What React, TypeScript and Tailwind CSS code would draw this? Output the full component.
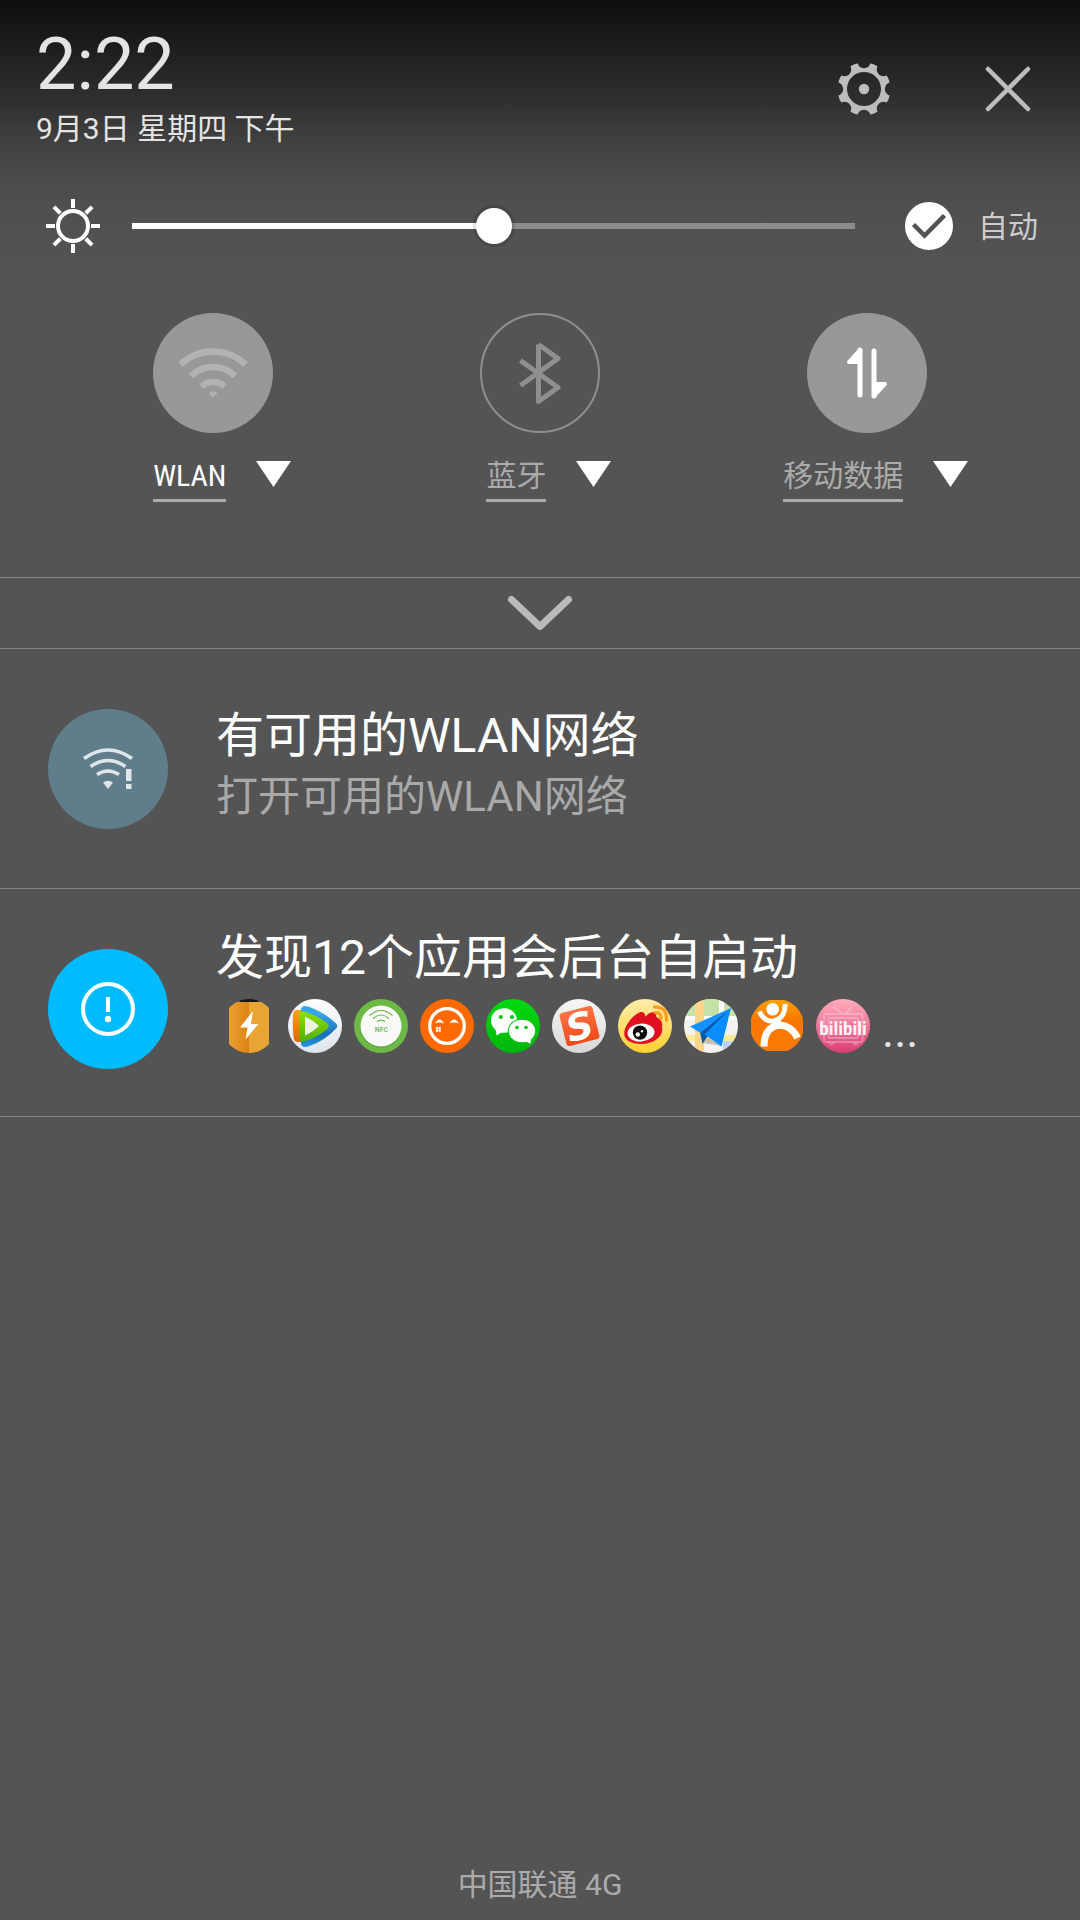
import { useState } from 'react';
import type { ReactNode } from 'react';

const WifiGlyph = () => (
  <svg viewBox="0 0 120 120" className="w-full h-full" fill="none" stroke="#b2b2b2" strokeWidth="6.500">
    <path d="M27.500 51.500 A47 47 0 0 1 92.500 51.500" />
    <path d="M38 63 A31.500 31.500 0 0 1 82 63" />
    <path d="M48.500 73.500 A17 17 0 0 1 71.500 73.500" />
    <path d="M55.500 80 Q60 76.500 64.500 80 L60 84.500 Z" fill="#b2b2b2" stroke="none" />
  </svg>
);

const BluetoothGlyph = () => (
  <svg viewBox="0 0 120 120" className="w-full h-full" fill="none" stroke="#8f8f8f" strokeWidth="5">
    <circle cx="60" cy="60" r="59" strokeWidth="2" />
    <path d="M58.500 31.500 V88.500 L78 74.500 L40.500 47.500 M40.500 72.500 L78 45.500 L58.500 31.500" strokeLinejoin="round" />
  </svg>
);

const DataGlyph = () => (
  <svg viewBox="0 0 120 120" className="w-full h-full" fill="#fff" stroke="#fff" strokeLinecap="round" strokeLinejoin="round">
    <path d="M53 37 V82" strokeWidth="5" />
    <path d="M53 37 L42 49 H53 Z" strokeWidth="4" />
    <path d="M67 38 V83" strokeWidth="5" />
    <path d="M67 83 L78 71 H67 Z" strokeWidth="4" />
  </svg>
);

const GearIcon = () => (
  <svg viewBox="-27 -27 54 54" className="w-[54px] h-[54px]">
    <mask id="gear-teeth">
      <rect x="-27" y="-27" width="54" height="54" fill="#fff" />
      {[0, 45, 90, 135, 180, 225, 270, 315].map((angle) => (
        <circle key={angle} cx="27.500" cy="0" r="6.700" fill="#000" transform={`rotate(${angle})`} />
      ))}
      <circle r="17" fill="#000" />
    </mask>
    <circle r="26.500" fill="#bdbdbd" mask="url(#gear-teeth)" />
    <circle r="5.200" fill="#bdbdbd" />
  </svg>
);

const SunIcon = () => (
  <svg viewBox="-27 -27 54 54" className="w-[54px] h-[54px] shrink-0" fill="none" stroke="#fff" strokeWidth="4">
    <circle r="15" />
    {[0, 45, 90, 135, 180, 225, 270, 315].map((angle) => (
      <path key={angle} d="M18 0 H27" transform={`rotate(${angle})`} />
    ))}
  </svg>
);

const BatteryApp = () => (
  <svg viewBox="0 0 54 54" className="w-[54px] h-[54px]">
    <defs>
      <linearGradient id="battery-left">
        <stop offset="0" stopColor="#eba032" />
        <stop offset="1" stopColor="#dd8415" />
      </linearGradient>
      <clipPath id="battery-clip"><circle cx="27" cy="27" r="27" /></clipPath>
    </defs>
    <g clipPath="url(#battery-clip)">
      <rect x="18" y="0" width="18" height="4" fill="#151515" />
      <rect x="7" y="3" width="20" height="51" fill="url(#battery-left)" />
      <rect x="27" y="3" width="20" height="51" fill="#e9a533" />
    </g>
    <path d="M31 12 L18 28.500 H25.500 L23.500 40.500 L36.500 25 H29 Z" fill="#fff" />
  </svg>
);

const VideoApp = () => (
  <svg viewBox="0 0 54 54" className="w-[54px] h-[54px]">
    <defs>
      <linearGradient id="video-bg" x2="0" y2="1">
        <stop offset="0" stopColor="#fcfdff" />
        <stop offset="1" stopColor="#dfe5ed" />
      </linearGradient>
      <linearGradient id="video-blue" x2="0" y2="1">
        <stop offset="0.200" stopColor="#38a5ea" />
        <stop offset="0.700" stopColor="#1a70b8" />
        <stop offset="1" stopColor="#2396df" />
      </linearGradient>
      <linearGradient id="video-green" x2="0" y2="1">
        <stop offset="0" stopColor="#8be000" />
        <stop offset="1" stopColor="#52b000" />
      </linearGradient>
      <linearGradient id="video-orange" x2="0" y2="1">
        <stop offset="0" stopColor="#f9a01b" />
        <stop offset="1" stopColor="#e06500" />
      </linearGradient>
    </defs>
    <circle cx="27" cy="27" r="27" fill="url(#video-bg)" />
    <path d="M13 10 Q14 6 20 7.500 Q36 13 48 24.500 Q50.500 27 48 29.500 Q37 42 20 47.500 Q14 49 13 45 Z" fill="url(#video-blue)" />
    <path d="M5 16 Q5 11 9 11 H13 V43 H10 Q6 43 5.500 38 Q4.500 27 5 16 Z" fill="url(#video-orange)" />
    <path d="M11.500 14 Q12.500 11.500 16 12.500 Q30 16.500 39.500 24.500 Q42 27 39.500 29.500 Q30 38.500 16 42.500 Q12.500 43.500 11.500 41 Z" fill="url(#video-green)" />
    <path d="M17 17.500 Q25 21 31 27 Q25 33 17 36.500 Z" fill="#eef1e6" />
  </svg>
);

const NfcApp = () => (
  <svg viewBox="0 0 54 54" className="w-[54px] h-[54px]">
    <circle cx="27" cy="27" r="27" fill="#6cba45" />
    <circle cx="27" cy="28" r="20.500" fill="#4b9a2c" />
    <circle cx="27" cy="27" r="20.500" fill="#f9faf8" />
    <g fill="none" stroke="#62b53d" strokeWidth="1.200">
      <path d="M15.500 16.500 Q27 6.500 38.500 16.500" />
      <path d="M19 19.500 Q27 12.500 35 19.500" />
      <path d="M23 22.800 Q27 19.500 31 22.800" />
    </g>
    <text x="27.500" y="32.500" textAnchor="middle" className="font-[Roboto] text-[7px] font-bold" fill="#86bb70">NFC</text>
  </svg>
);

const SmileApp = () => (
  <svg viewBox="0 0 54 54" className="w-[54px] h-[54px]">
    <circle cx="27" cy="27" r="27" fill="#ff6a00" />
    <circle cx="27" cy="27" r="17.300" fill="none" stroke="#fff" strokeWidth="3.300" />
    <path d="M15 24.500 Q19.500 16.500 24 24.500 Q19.500 22.500 15 24.500 Z" fill="#fff" />
    <path d="M29.500 24.500 Q34 16.500 38.700 24.500 Q34 22.500 29.500 24.500 Z" fill="#fff" />
    <path d="M17 27.800 V33 M19.800 27.800 V33 M15.800 29.200 H21 M15.800 31.700 H21" stroke="#fff" strokeWidth="1.300" />
  </svg>
);

const WechatApp = () => (
  <svg viewBox="0 0 54 54" className="w-[54px] h-[54px]">
    <linearGradient id="wechat-bg" x2="0" y2="1">
      <stop offset="0" stopColor="#00da0f" />
      <stop offset="1" stopColor="#00b60c" />
    </linearGradient>
    <circle cx="27" cy="27" r="27" fill="url(#wechat-bg)" />
    <ellipse cx="18" cy="21.500" rx="13" ry="12.300" fill="#fff" />
    <path d="M10 30 L10.500 36.500 L18 32 Z" fill="#fff" />
    <ellipse cx="36" cy="32" rx="14.300" ry="12.300" fill="#00c60d" />
    <ellipse cx="36" cy="32" rx="13.200" ry="11.200" fill="#fff" />
    <path d="M44.500 38 L44.800 44.500 L38 42 Z" fill="#fff" />
    <g fill="#00c60d">
      <circle cx="14.800" cy="18" r="2.100" />
      <circle cx="26" cy="18" r="2.100" />
      <circle cx="31" cy="28.500" r="1.800" />
      <circle cx="40" cy="28.500" r="1.800" />
    </g>
  </svg>
);

const SogouApp = () => (
  <svg viewBox="0 0 54 54" className="w-[54px] h-[54px]">
    <linearGradient id="sogou-bg" x2="0" y2="1">
      <stop offset="0" stopColor="#f6f6f6" />
      <stop offset="1" stopColor="#d9d9d9" />
    </linearGradient>
    <linearGradient id="sogou-tile" x2="0" y2="1">
      <stop offset="0" stopColor="#fb7345" />
      <stop offset="1" stopColor="#f04a18" />
    </linearGradient>
    <circle cx="27" cy="27" r="27" fill="url(#sogou-bg)" />
    <g transform="rotate(-14 27.500 27)">
      <rect x="10.500" y="10" width="34" height="34" rx="3" fill="url(#sogou-tile)" />
      <text x="27.500" y="40.500" textAnchor="middle" className="font-['DejaVu_Sans'] text-[37px] font-bold italic" fill="#fff">S</text>
    </g>
  </svg>
);

const WeiboApp = () => (
  <svg viewBox="0 0 54 54" className="w-[54px] h-[54px]">
    <linearGradient id="weibo-bg" x2="0" y2="1">
      <stop offset="0" stopColor="#ffedab" />
      <stop offset="1" stopColor="#ffd02f" />
    </linearGradient>
    <circle cx="27" cy="27" r="27" fill="url(#weibo-bg)" />
    <path d="M6.200 34 C6.500 27 14 17 21.500 13.500 C25 12 27 14 27.500 17.500 C31 13.500 36 12 37.500 14.500 C38.300 16 38 17.500 39 18.500 C43 20 45 24 44 28 C46 37 36 45 23.500 45 C13 45 6 41 6.200 34 Z" fill="#e01020" />
    <ellipse cx="23" cy="33.600" rx="13.500" ry="9" fill="#fff" transform="rotate(-5 23 33.600)" />
    <circle cx="22" cy="33.600" r="7.200" fill="#0c0c0c" />
    <circle cx="19.800" cy="35.500" r="2.200" fill="#fff" />
    <circle cx="24" cy="32.300" r="1.200" fill="#fff" />
    <g fill="none" stroke="#fb9d1e" strokeWidth="3.300" strokeLinecap="round">
      <path d="M36.500 7.800 Q49 7.500 48.500 21" />
      <path d="M37.500 13.500 Q43.500 13.500 42.800 19.500" />
    </g>
  </svg>
);

const MapApp = () => (
  <svg viewBox="0 0 54 54" className="w-[54px] h-[54px]">
    <clipPath id="map-clip"><circle cx="27" cy="27" r="27" /></clipPath>
    <g clipPath="url(#map-clip)">
      <rect width="54" height="54" fill="#f5f2ed" />
      <rect width="35" height="17" fill="#c4e1a6" />
      <rect x="40" width="14" height="17" fill="#c4e1a6" />
      <path d="M35 0 H40 V17 H54 V21 H0 V17 H35 Z" fill="#fff" />
      <rect y="36" width="54" height="6" fill="#fbeb92" />
      <rect x="39" y="42" width="15" height="12" fill="#b9d6f7" />
      <rect x="11" width="9" height="54" fill="#fdd58a" />
    </g>
    <path d="M19 44 L38 47 L24 39 Z" fill="#555" opacity="0.300" />
    <path d="M47 9 L16 33 L18.500 45 L23.500 37.500 Z" fill="#0a56a8" />
    <path d="M47 9 L6 27.500 L16.500 34 Z" fill="#1590ff" />
    <path d="M47 9 L20.500 35.500 L37.500 47.500 Z" fill="#0a8dff" />
  </svg>
);

const DianpingApp = () => (
  <svg viewBox="0 0 54 54" className="w-[54px] h-[54px]">
    <defs>
      <linearGradient id="dianping-bg" x2="0" y2="1">
        <stop offset="0" stopColor="#ffa200" />
        <stop offset="0.400" stopColor="#fb7600" />
        <stop offset="1" stopColor="#fb7a06" />
      </linearGradient>
      <clipPath id="dianping-clip"><circle cx="27" cy="27" r="27" /></clipPath>
    </defs>
    <rect x="1" y="1" width="52" height="51" fill="url(#dianping-bg)" clipPath="url(#dianping-clip)" />
    <circle cx="22.700" cy="10.300" r="6.300" fill="#fff" />
    <g fill="none" stroke="#fff">
      <path d="M9.500 12.500 C12.500 20 19 23.500 25 21.500 C32 19.500 35.500 13 35 5" strokeWidth="5" />
      <path d="M14 47.500 C14 36 18 28.500 27 26.500 C36 25 43.500 30.500 47.500 39" strokeWidth="7" />
      <path d="M26 21 L30 27" strokeWidth="7" />
    </g>
  </svg>
);

const BilibiliApp = () => (
  <svg viewBox="0 0 54 54" className="w-[54px] h-[54px]">
    <linearGradient id="bilibili-bg" x2="0" y2="1">
      <stop offset="0" stopColor="#ffacbb" />
      <stop offset="0.500" stopColor="#ee789b" />
      <stop offset="1" stopColor="#d83d72" />
    </linearGradient>
    <circle cx="27" cy="27" r="27" fill="url(#bilibili-bg)" />
    <g fill="none" stroke="#fff" strokeOpacity="0.250" strokeWidth="1.800">
      <rect x="8" y="15" width="38.500" height="28" rx="1.500" />
      <rect x="12.500" y="19" width="29.500" height="20" rx="1" />
      <path d="M17 7.500 L26 14.500 M36 8 L29 14.500 M13 43 Q15.500 48 18 43 M37 43 Q39.500 48 42 43" />
    </g>
    <text x="27" y="36" textAnchor="middle" className="font-['Roboto_Condensed',Roboto] text-[19px] font-bold" fill="#fff5f8">bilibili</text>
  </svg>
);

const apps = [
  { name: 'battery', Icon: BatteryApp },
  { name: 'video', Icon: VideoApp },
  { name: 'nfc', Icon: NfcApp },
  { name: 'smile', Icon: SmileApp },
  { name: 'wechat', Icon: WechatApp },
  { name: 'sogou', Icon: SogouApp },
  { name: 'weibo', Icon: WeiboApp },
  { name: 'map', Icon: MapApp },
  { name: 'dianping', Icon: DianpingApp },
  { name: 'bilibili', Icon: BilibiliApp },
];

interface TileProps {
  label: string;
  filled?: boolean;
  highlighted?: boolean;
  children: ReactNode;
}

const QuickTile: React.FC<TileProps> = ({ label, filled, highlighted, children }) => (
  <div className="flex flex-col items-center">
    <button
      type="button"
      aria-label={label}
      className={`w-[120px] h-[120px] rounded-full ${filled ? 'bg-[#989898]' : ''}`}
    >
      {children}
    </button>
    <button type="button" className="mt-6 pl-[18px] flex items-start gap-[30px]">
      <span
        className={`pb-1 border-b-3 border-[#ababab] font-['Roboto_Condensed',Roboto,'Noto_Sans_CJK_SC',sans-serif] text-[30px] leading-[38px] ${
          highlighted ? 'text-white' : 'text-[#ababab]'
        }`}
      >
        {label}
      </span>
      <svg viewBox="0 0 35 26" className="mt-1 w-[35px] h-[26px]">
        <path d="M0 0 H35 L17.500 26 Z" fill="#fff" />
      </svg>
    </button>
  </div>
);

const App: React.FC = () => {
  const [brightness, setBrightness] = useState(50);
  const [auto, setAuto] = useState(true);

  return (
    <div className="min-h-screen flex flex-col bg-[#545454] font-[Roboto,'Noto_Sans_CJK_SC',sans-serif]">
      <div className="bg-[linear-gradient(#0f0f0f_0px,#141414_20px,#222222_60px,#323232_107px,#3d3d3d_133px,#454545_155px,#4b4b4b_180px,#4f4f4f_205px,#545454_270px)]">
        {/* Clock and actions */}
        <header className="flex items-center justify-between pt-[29px] pl-9 pr-6">
          <div className="text-[#e4e4e4]">
            <h1 className="text-[72px] leading-[72px]">2:22</h1>
            <p className="mt-2 text-[30px] leading-[40px]">9月3日 星期四 下午</p>
          </div>
          <div className="flex gap-12">
            <button type="button" aria-label="设置" className="w-24 h-24 flex items-center justify-center">
              <GearIcon />
            </button>
            <button type="button" aria-label="关闭" className="w-24 h-24 flex items-center justify-center">
              <svg viewBox="0 0 46 46" className="w-[46px] h-[46px]" stroke="#bdbdbd" strokeWidth="4.500" strokeLinecap="round">
                <path d="M3 3 L43 43 M43 3 L3 43" />
              </svg>
            </button>
          </div>
        </header>

        {/* Brightness */}
        <div className="mt-[47px] h-[60px] pl-[46px] pr-[42px] flex items-center gap-8">
          <SunIcon />
          <input
            type="range"
            aria-label="亮度"
            value={brightness}
            onChange={(e) => setBrightness(Number(e.target.value))}
            style={{
              backgroundImage: `linear-gradient(to right, #fff ${brightness}%, #8c8c8c ${brightness}%)`,
            }}
            className="flex-1 min-w-0 h-1.5 appearance-none [&::-webkit-slider-thumb]:appearance-none [&::-webkit-slider-thumb]:w-9 [&::-webkit-slider-thumb]:h-9 [&::-webkit-slider-thumb]:rounded-full [&::-webkit-slider-thumb]:bg-white [&::-webkit-slider-thumb]:shadow-[0_0_0_3px_rgba(0,0,0,0.12)]"
          />
          <label className="ml-[18px] flex items-center gap-[25px] text-[30px] leading-[42px] text-[#cccccc]">
            <span className="grid w-12 h-12">
              <input
                type="checkbox"
                checked={auto}
                onChange={(e) => setAuto(e.target.checked)}
                className="peer col-start-1 row-start-1 w-12 h-12 appearance-none rounded-full border-2 border-white checked:bg-white"
              />
              <svg
                viewBox="0 0 48 48"
                className="col-start-1 row-start-1 w-12 h-12 pointer-events-none invisible peer-checked:visible"
              >
                <path d="M8.500 22.500 L19.500 33.500 L39.500 13.500" fill="none" stroke="#515151" strokeWidth="4.500" />
              </svg>
            </span>
            <span className="pt-px">自动</span>
          </label>
        </div>

        {/* Quick tiles */}
        <div className="mt-[57px] px-[50px] pb-[75px] grid grid-cols-3">
          <QuickTile label="WLAN" filled highlighted>
            <WifiGlyph />
          </QuickTile>
          <QuickTile label="蓝牙">
            <BluetoothGlyph />
          </QuickTile>
          <QuickTile label="移动数据" filled>
            <DataGlyph />
          </QuickTile>
        </div>
      </div>

      <button
        type="button"
        aria-label="展开"
        className="h-[72px] flex items-center justify-center border-y border-[#858585]"
      >
        <svg viewBox="0 0 64 36" className="w-16 h-9" fill="none" stroke="#bababa" strokeWidth="7" strokeLinecap="round" strokeLinejoin="round">
          <path d="M3.500 4.500 L32 31.500 L60.500 4.500" />
        </svg>
      </button>

      {/* Notifications */}
      <main>
        <article className="pt-[60px] pb-[57px] px-12 flex items-start gap-12 border-b border-[#858585]">
          <svg viewBox="0 0 120 120" className="w-[120px] h-[120px] shrink-0">
            <circle cx="60" cy="60" r="60" fill="#607d8b" />
            <g fill="none" stroke="#dfe5e8" strokeWidth="3.600">
              <path d="M36 49.500 Q60 32.500 84 49.500" />
              <path d="M42.500 57.500 Q60 45.500 77.500 57.500" />
              <path d="M49 65.500 Q60 58.500 71 65.500" />
            </g>
            <path d="M55 73.500 Q60 70 65 73.500 L60 80 Z" fill="#dfe5e8" />
            <path d="M78 60 H83.500 V72 H78 Z M78 75 H83.500 V80 H78 Z" fill="#dfe5e8" />
          </svg>
          <div>
            <h2 className="text-[48px] leading-[54px] text-white">有可用的WLAN网络</h2>
            <p className="text-[42px] leading-[68px] text-[#a9a9a9]">打开可用的WLAN网络</p>
          </div>
        </article>

        <article className="pt-[42px] pb-[47px] px-12 flex items-start gap-12 border-b border-[#858585]">
          <svg viewBox="0 0 120 120" className="mt-[18px] w-[120px] h-[120px] shrink-0">
            <circle cx="60" cy="60" r="60" fill="#00bcff" />
            <circle cx="60" cy="60" r="25" fill="none" stroke="#fff" strokeWidth="4" />
            <path d="M60 48 V63" stroke="#fff" strokeWidth="4" />
            <circle cx="60" cy="70" r="3.200" fill="#fff" />
          </svg>
          <div>
            <h2 className="text-[48px] leading-[54px] text-white">发现12个应用会后台自启动</h2>
            <div className="mt-3.5 pl-1.5 flex items-center gap-3">
              {apps.map(({ name, Icon }) => (
                <Icon key={name} />
              ))}
              <span className="pt-2.5 text-[46px] leading-[34px] text-[#e4e4e4]">...</span>
            </div>
          </div>
        </article>
      </main>

      <footer className="mt-auto pb-[15px] text-center text-[30px] leading-[40px] text-[#ababab]">
        中国联通 4G
      </footer>
    </div>
  );
};

export default App;
